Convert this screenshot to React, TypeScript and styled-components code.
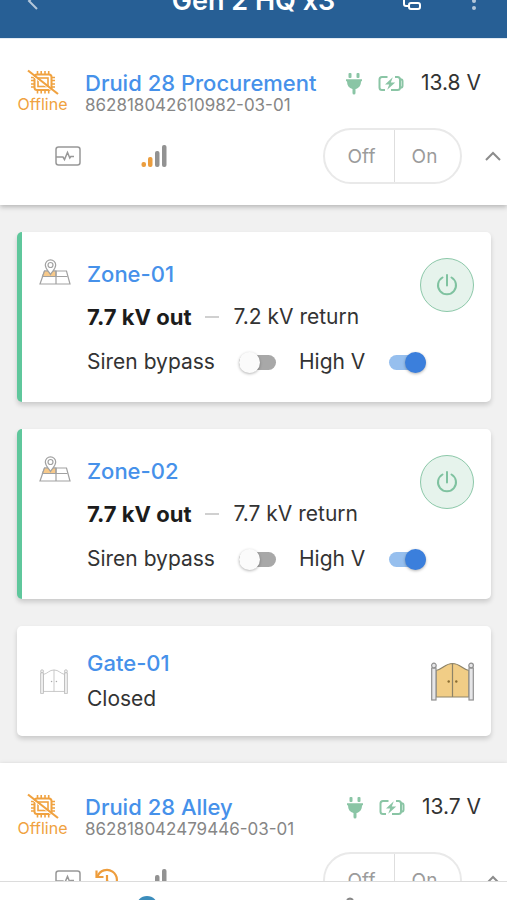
import React from "react";
import styled, { createGlobalStyle } from "styled-components";

const GlobalStyle = createGlobalStyle`
  *, *::before, *::after { box-sizing: border-box; }
  body {
    margin: 0;
    background: #f1f1f1;
    color: #333;
    font-family: Inter, "Liberation Sans", sans-serif;
    font-size: 21px;
    line-height: 26px;
  }
  button { font: inherit; color: inherit; padding: 0; border: 0; background: none; cursor: pointer; }
  a { text-decoration: none; }
  h1, h2, h3, p { margin: 0; }
  svg { display: block; flex: none; }
`;

const Page = styled.div`
  display: flex;
  flex-direction: column;
  height: 100vh;
  overflow: hidden;
`;

const TopBar = styled.header`
  flex: none;
  display: grid;
  grid-template-columns: 1fr auto 1fr;
  align-items: center;
  height: 76px;
  margin-top: -37px;
  padding: 0 27px;
  background: #275f95;
  border-bottom: 1px solid #e3ebf3;
  color: #fff;
`;

const TopTitle = styled.h1`
  font-size: 27px;
  font-weight: 600;
  line-height: 32px;
`;

const TopActions = styled.div`
  display: flex;
  justify-content: flex-end;
  align-items: center;
  gap: 51px;
  padding-right: 4px;
`;

const IconButton = styled.button<{ $faded?: boolean }>`
  display: flex;
  justify-self: start;
  opacity: ${(p) => (p.$faded ? 0.65 : 1)};
`;

const Feed = styled.main`
  flex: 1;
  min-height: 0;
  overflow: hidden;
`;

const Device = styled.section`
  background: #fff;
  box-shadow: 0 2px 5px rgba(0, 0, 0, 0.25);
  padding: 28px 0 21px;
`;

const DeviceHead = styled.div`
  display: flex;
  align-items: flex-start;
  padding-right: 26px;
`;

const Status = styled.div`
  display: flex;
  flex-direction: column;
  align-items: center;
  width: 85px;
  color: #f0a240;
  font-size: 16px;
  line-height: 18px;
  padding-top: 1px;
`;

const DeviceInfo = styled.div`
  flex: 1;
  padding-top: 3px;
`;

const DeviceName = styled.h2`
  font-size: 22px;
  font-weight: 500;
  line-height: 26px;
`;

const NameLink = styled.a`
  color: #4691ea;
`;

const Serial = styled.p`
  color: #868686;
  font-size: 17px;
  line-height: 18px;
`;

const Power = styled.div`
  display: flex;
  align-items: center;
  padding-top: 3px;
  color: #8ac5a5;
`;

const Voltage = styled.span`
  margin-left: 17px;
  color: #333;
`;

const DeviceTools = styled.div`
  display: grid;
  grid-template-columns: 40px 46px 1fr auto auto;
  align-items: center;
  padding: 0 6px 0 55px;
  margin-top: 14px;
  color: #969696;
`;

const SignalSlot = styled.div`
  grid-column: 3;
`;

const SwitchPair = styled.div`
  display: flex;
  height: 56px;
  border: 2px solid #e9e9e9;
  border-radius: 28px;
  overflow: hidden;
`;

const PairButton = styled.button<{ $side: "off" | "on" }>`
  width: ${(p) => (p.$side === "off" ? 69 : 66)}px;
  padding: ${(p) => (p.$side === "off" ? "1px 0 0 4px" : "1px 6px 0 0")};
  border-left: ${(p) => (p.$side === "on" ? "1px solid #dedede" : "0")};
  color: #9b9b9b;
  font-size: 19px;
`;

const Fold = styled.button`
  display: flex;
  margin-left: 23px;
`;

const CardList = styled.div`
  display: flex;
  flex-direction: column;
  gap: 27px;
  padding: 27px 16px 27px 17px;
`;

const Card = styled.article<{ $accent?: boolean }>`
  display: grid;
  grid-template-columns: auto 1fr auto;
  background: #fff;
  border-left: ${(p) => (p.$accent ? "5px solid #5fc79c" : "0")};
  border-radius: 5px;
  box-shadow: 0 3px 5px rgba(0, 0, 0, 0.16);
`;

const ZoneCard = styled(Card)`
  column-gap: 16px;
  padding: 26px 17px 27px;
`;

const GateCard = styled(Card)`
  column-gap: 19px;
  align-items: center;
  padding: 24px 17px 24px 23px;
`;

const CardName = styled.h3`
  font-size: 22px;
  font-weight: 500;
  line-height: 26px;
`;

const ZoneText = styled.div`
  display: grid;
  gap: 17px;
  padding-top: 3px;
`;

const Reading = styled.p`
  display: flex;
  align-items: center;
`;

const Output = styled.strong`
  color: #1c1c1c;
  font-size: 22px;
  font-weight: 700;
`;

const Dash = styled.span`
  width: 14px;
  height: 2px;
  margin: 0 14px;
  background: #d0d0d0;
`;

const PowerButton = styled.button`
  display: grid;
  place-items: center;
  width: 54px;
  height: 54px;
  border: 1px solid #8cc8a9;
  border-radius: 50%;
  background: #e6f3ec;
`;

const Toggles = styled.div`
  grid-column: 2 / 4;
  display: flex;
  gap: 23px;
  margin-top: 19px;
`;

const ToggleLabel = styled.label`
  display: flex;
  align-items: center;
  gap: 24px;
`;

const Toggle = styled.input.attrs({ type: "checkbox", role: "switch" })`
  appearance: none;
  display: flex;
  align-items: center;
  width: 37px;
  height: 15px;
  margin: 0;
  border-radius: 8px;
  background: #a8a8a8;

  &::before {
    content: "";
    width: 21px;
    height: 21px;
    border-radius: 50%;
    background: #fbfbfb;
    box-shadow: 0 1px 3px rgba(0, 0, 0, 0.3);
  }
  &:checked {
    justify-content: flex-end;
    background: #96bfee;
  }
  &:checked::before { background: #3b7fdc; }
`;

const GateText = styled.div`
  display: grid;
  gap: 10px;
`;

const BottomNav = styled.nav`
  flex: none;
  display: grid;
  grid-template-columns: 294px 1fr;
  height: 19px;
  overflow: hidden;
  padding-top: 14px;
  background: #fff;
  border-top: 1px solid #dcdcdc;
`;

const NavLink = styled.a<{ $end?: boolean }>`
  display: flex;
  justify-content: ${(p) => (p.$end ? "flex-start" : "center")};
  padding-left: ${(p) => (p.$end ? 43 : 0)}px;
`;

const ChipOffIcon = () => (
  <svg width="32" height="27" viewBox="0 0 32 27" fill="none" stroke="#f0a240" strokeWidth="1.6">
    <rect x="7.5" y="6.5" width="17" height="15.5" rx="2.5" strokeWidth="2" />
    <rect x="11" y="10" width="10" height="8.5" />
    <path d="M10.500 6V3M14.200 6V3M18 6V3M21.700 6V3M10.500 22v3.500M14.200 22v3.500M18 22v3.500M21.700 22v3.500M7 9.500H4M7 12.500H4M7 16H4M7 19H4M25 9.500h3M25 12.500h3M25 16h3M25 19h3" />
    <path d="M.8 4.200 30 27" stroke="#fff" strokeWidth="1" />
    <path d="M1 2.500 31 26" strokeWidth="2.200" />
  </svg>
);

const PlugIcon = () => (
  <svg width="18" height="23" viewBox="0 0 18 23" fill="#8ac5a5" aria-label="Mains power">
    <rect x="3.500" y="1" width="3" height="5" rx="1" />
    <rect x="11.500" y="1" width="3" height="5" rx="1" />
    <path d="M1 7.200h16v2h-1c0 4.300-2 6.900-5.500 7.800V21a1.500 1.500 0 0 1-3 0v-4C4 16.100 2 13.500 2 9.200H1z" />
  </svg>
);

const BatteryIcon = styled.svg`
  margin-left: 15px;
`;

const Battery = () => (
  <BatteryIcon width="26" height="17" viewBox="0 0 26 17" fill="none" stroke="#8ac5a5" strokeWidth="2" aria-label="Battery charging">
    <path d="M9.500 2H4Q1.500 2 1.500 4.500v8Q1.500 15 4 15h3M17 2h2.500q2.500 0 2.500 2.500v8q0 2.500-2.500 2.500H13" />
    <path d="M22 4.200h.5q2 0 2 2v4.600q0 2-2 2H22" />
    <path d="M14.800 2.300 7 9.500h4.200l-2 5.300 8-7.400h-4.400z" fill="#8ac5a5" stroke="none" />
  </BatteryIcon>
);

const PulseIcon = () => (
  <svg width="26" height="20" viewBox="0 0 26 20" fill="none" stroke="#989898" strokeWidth="1.500">
    <rect x="1" y="1" width="24" height="18" rx="2.500" />
    <path d="M1 11h7l1.500 2.500 3-7 2.300 5.500 1-1.500H19" />
  </svg>
);

const HistoryIcon = () => (
  <svg width="23" height="24" viewBox="0 0 23 24" fill="none" stroke="#ee9d3c" strokeWidth="2.200">
    <path d="M2.500 8.500A10 10 0 1 1 3 16.500M12 7v6l4.500 3" />
    <path d="M1.500 2.500v6.500h7" />
  </svg>
);

const SignalIcon = () => (
  <svg width="26" height="22" viewBox="0 0 26 22">
    <rect x=".5" y="17" width="4.500" height="5" rx="2" fill="#eb9d3e" />
    <rect x="7" y="12" width="4.500" height="10" rx="2" fill="#eb9d3e" />
    <rect x="14" y="6" width="4.500" height="16" rx="2" fill="#929292" />
    <rect x="21" y="0" width="4.500" height="22" rx="2" fill="#929292" />
  </svg>
);

const ChevronUp = () => (
  <svg width="16" height="10" viewBox="0 0 16 10" fill="none" stroke="#8c8c8c" strokeWidth="2">
    <path d="m1 9 7-7 7 7" />
  </svg>
);

const ZoneIcon = () => (
  <svg width="32" height="28" viewBox="0 0 32 28" fill="#fff" stroke="#a1a1a1" strokeWidth="1.200">
    <path d="M5.500 13h22l3.500 13H1z" />
    <path d="M5.500 13H17v5.500H3.500z" fill="#f7c98a" />
    <path d="M17 13v13M3.500 18.500h25" />
    <path d="M11.500 16.500C9.500 13 6.300 10.500 6.300 7a5.200 5.200 0 0 1 10.400 0c0 3.500-3.200 6-5.200 9.500z" />
    <circle cx="11.500" cy="7" r="2.500" />
  </svg>
);

const PowerIcon = () => (
  <svg width="22" height="22" viewBox="0 0 22 22" fill="none" stroke="#7fc2a0" strokeWidth="2">
    <path d="M6.500 3.500a9 9 0 1 0 9 0M11 1v10.500" strokeLinecap="round" />
  </svg>
);

const GateIcon = ({ small }: { small?: boolean }) => (
  <svg
    width={small ? 28 : 43}
    height={small ? 25 : 39}
    viewBox="0 0 43 39"
    fill={small ? "#fff" : "#f1cd86"}
    stroke={small ? "#b8b8b8" : "#8d8368"}
    strokeWidth="1.200"
  >
    <path d="M5 8.500C12 7 14 1.500 21.500 1.500S31 7 38 8.500V35H5zM21.500 1.500V35" />
    <g fill={small ? "#eee" : "#e6e6e8"} stroke={small ? "#b8b8b8" : "#909090"}>
      <rect x=".7" y="6" width="4.300" height="32" />
      <rect x="38" y="6" width="4.300" height="32" />
      <circle cx="2.900" cy="3.500" r="2.300" />
      <circle cx="40.100" cy="3.500" r="2.300" />
    </g>
    <circle cx="17.700" cy="19.500" r="1.200" fill={small ? "#aaa" : "#8a6d32"} stroke="none" />
    <circle cx="25.300" cy="19.500" r="1.200" fill={small ? "#aaa" : "#8a6d32"} stroke="none" />
  </svg>
);

interface DeviceProps {
  name: string;
  serial: string;
  voltage: string;
  history?: boolean;
}

const DevicePanel = ({ name, serial, voltage, history }: DeviceProps) => (
  <Device>
    <DeviceHead>
      <Status>
        <ChipOffIcon />
        Offline
      </Status>
      <DeviceInfo>
        <DeviceName>
          <NameLink href="#device">{name}</NameLink>
        </DeviceName>
        <Serial>{serial}</Serial>
      </DeviceInfo>
      <Power>
        <PlugIcon />
        <Battery />
        <Voltage>{voltage}</Voltage>
      </Power>
    </DeviceHead>
    <DeviceTools>
      <IconButton aria-label="Diagnostics">
        <PulseIcon />
      </IconButton>
      {history && (
        <IconButton aria-label="History">
          <HistoryIcon />
        </IconButton>
      )}
      <SignalSlot>
        <SignalIcon />
      </SignalSlot>
      <SwitchPair role="group" aria-label={name + " power"}>
        <PairButton $side="off">Off</PairButton>
        <PairButton $side="on">On</PairButton>
      </SwitchPair>
      <Fold aria-label="Collapse">
        <ChevronUp />
      </Fold>
    </DeviceTools>
  </Device>
);

const ZonePanel = ({ name, out, back }: { name: string; out: string; back: string }) => (
  <ZoneCard $accent>
    <ZoneIcon />
    <ZoneText>
      <CardName>
        <NameLink href="#zone">{name}</NameLink>
      </CardName>
      <Reading>
        <Output>{out}</Output>
        <Dash />
        {back}
      </Reading>
    </ZoneText>
    <PowerButton aria-label={"Power " + name}>
      <PowerIcon />
    </PowerButton>
    <Toggles>
      <ToggleLabel>
        Siren bypass
        <Toggle />
      </ToggleLabel>
      <ToggleLabel>
        High V
        <Toggle defaultChecked />
      </ToggleLabel>
    </Toggles>
  </ZoneCard>
);

export default function App() {
  return (
    <Page>
      <GlobalStyle />
      <TopBar>
        <IconButton $faded aria-label="Back">
          <svg width="12" height="18" viewBox="0 0 12 18" fill="none" stroke="#fff" strokeWidth="2">
            <path d="m10 1-8 8 8 8" />
          </svg>
        </IconButton>
        <TopTitle>Gen 2 HQ x3</TopTitle>
        <TopActions>
          <IconButton aria-label="Groups">
            <svg width="19" height="18" viewBox="0 0 19 18" fill="none" stroke="#fff" strokeWidth="2">
              <rect x="2" y="1" width="11" height="6" rx="2" />
              <path d="M2 5v7q0 2 2 2h3" />
              <rect x="7" y="11" width="11" height="6" rx="2" />
            </svg>
          </IconButton>
          <IconButton $faded aria-label="More">
            <svg width="4" height="18" viewBox="0 0 4 18" fill="#fff">
              <circle cx="2" cy="2" r="2" />
              <circle cx="2" cy="9" r="2" />
              <circle cx="2" cy="16" r="2" />
            </svg>
          </IconButton>
        </TopActions>
      </TopBar>
      <Feed>
        <DevicePanel name="Druid 28 Procurement" serial="862818042610982-03-01" voltage="13.8 V" />
        <CardList>
          <ZonePanel name="Zone-01" out="7.7 kV out" back="7.2 kV return" />
          <ZonePanel name="Zone-02" out="7.7 kV out" back="7.7 kV return" />
          <GateCard>
            <GateIcon small />
            <GateText>
              <CardName>
                <NameLink href="#gate">Gate-01</NameLink>
              </CardName>
              <p>Closed</p>
            </GateText>
            <GateIcon />
          </GateCard>
        </CardList>
        <DevicePanel name="Druid 28 Alley" serial="862818042479446-03-01" voltage="13.7 V" history />
      </Feed>
      <BottomNav>
        <NavLink href="#sites" aria-label="Sites">
          <svg width="22" height="22" viewBox="0 0 22 22" fill="#3c8dbc">
            <circle cx="11" cy="11" r="11" />
          </svg>
        </NavLink>
        <NavLink $end href="#alerts" aria-label="Alerts">
          <svg width="26" height="26" viewBox="0 0 26 26" fill="none" stroke="#888" strokeWidth="2">
            <path d="M10 4q3-3 6 0M4 20c4-4 2-10 5-13 3-3 5-3 8 0 3 3 1 9 5 13z" />
          </svg>
        </NavLink>
      </BottomNav>
    </Page>
  );
}
